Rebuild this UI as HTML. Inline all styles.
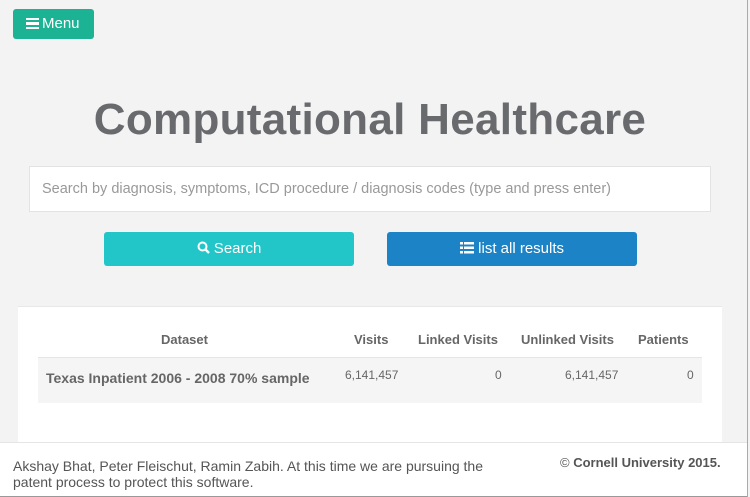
<!DOCTYPE html>
<html><head><meta charset="utf-8"><style>
*{margin:0;padding:0;box-sizing:border-box}
body{width:750px;height:497px;background:#f3f3f3;font-family:"Liberation Sans",sans-serif;position:relative;overflow:hidden;color:#555}
.abs{position:absolute}
#menu{left:13px;top:9px;width:81px;height:30px;background:#1bb394;border-radius:3px;color:#fff;font-size:15px;line-height:30px;padding-left:13px}
h1{position:absolute;left:0;width:740px;top:95px;text-align:center;font-size:44px;font-weight:bold;color:#686a6d;letter-spacing:0.3px}
#search{left:29px;top:166px;width:682px;height:46px;background:#fff;border:1px solid #e3e3e3;font-size:14.5px;color:#999;line-height:44px;padding-left:12px}
.btn{height:34px;border-radius:3px;color:#fff;font-size:15px;line-height:34px;text-align:center}
#b1{left:104px;top:232px;width:250px;background:#23c6c8}
#b2{left:387px;top:232px;width:250px;background:#1c84c6}
#panel{left:18px;top:306px;width:704px;height:140px;background:#fff;border-top:1px solid #e8e8e8}
.row{left:38px;top:357px;width:664px;height:46px;background:#f5f5f5;border-top:1px solid #e5e5e5}
.td{position:absolute;font-size:12px;color:#666;top:368px}
#foot{left:0;top:442px;width:748px;height:55px;background:#fff;border-top:1px solid #e5e5e5;border-bottom:1px solid #999}
#vline{left:747px;top:0;width:1px;height:497px;background:#aaa}
</style></head><body>
<div id="menu" class="abs"><span style="display:inline-block;width:13px;height:11px;border-top:2.5px solid #fff;border-bottom:2.5px solid #fff;position:relative;vertical-align:-1px;margin-right:3px"><span style="position:absolute;left:0;top:2px;width:13px;height:2.5px;background:#fff"></span></span>Menu</div>
<h1>Computational Healthcare</h1>
<div id="search" class="abs">Search by diagnosis, symptoms, ICD procedure / diagnosis codes (type and press enter)</div>
<div id="b1" class="abs btn"><svg width="13" height="13" viewBox="0 0 13 13" style="vertical-align:-1px"><circle cx="5.5" cy="5.5" r="4" fill="none" stroke="#fff" stroke-width="2"/><line x1="8.5" y1="8.5" x2="12" y2="12" stroke="#fff" stroke-width="2.4"/></svg> Search</div>
<div id="b2" class="abs btn"><svg width="14" height="12" viewBox="0 0 14 12" style="vertical-align:-1px"><g fill="#fff"><rect x="0" y="0" width="3" height="2.5"/><rect x="4" y="0" width="10" height="2.5"/><rect x="0" y="4.5" width="3" height="2.5"/><rect x="4" y="4.5" width="10" height="2.5"/><rect x="0" y="9" width="3" height="2.5"/><rect x="4" y="9" width="10" height="2.5"/></g></svg> list all results</div>
<div id="panel" class="abs"></div>
<div class="abs" style="font-size:13px;font-weight:bold;color:#666;top:332px;left:161px">Dataset</div>
<div class="abs" style="font-size:13px;font-weight:bold;color:#666;top:332px;left:354px">Visits</div>
<div class="abs" style="font-size:13px;font-weight:bold;color:#666;top:332px;left:418px">Linked Visits</div>
<div class="abs" style="font-size:13px;font-weight:bold;color:#666;top:332px;left:521px">Unlinked Visits</div>
<div class="abs" style="font-size:13px;font-weight:bold;color:#666;top:332px;left:638px">Patients</div>
<div class="abs row"></div>
<div class="abs" style="font-size:14px;font-weight:bold;color:#666;top:370px;left:46px">Texas Inpatient 2006 - 2008 70% sample</div>
<div class="td" style="left:345px">6,141,457</div>
<div class="td" style="left:495px">0</div>
<div class="td" style="left:565px">6,141,457</div>
<div class="td" style="left:687px">0</div>
<div id="foot" class="abs"></div>
<div class="abs" style="left:13px;top:458px;width:500px;font-size:14px;line-height:16px;color:#555">Akshay Bhat, Peter Fleischut, Ramin Zabih. At this time we are pursuing the patent process to protect this software.</div>
<div class="abs" style="left:560px;top:455px;font-size:13px;font-weight:bold;color:#555"><span style="font-weight:normal">©</span> Cornell University 2015.</div>
<div id="vline" class="abs"></div>
</body></html>
